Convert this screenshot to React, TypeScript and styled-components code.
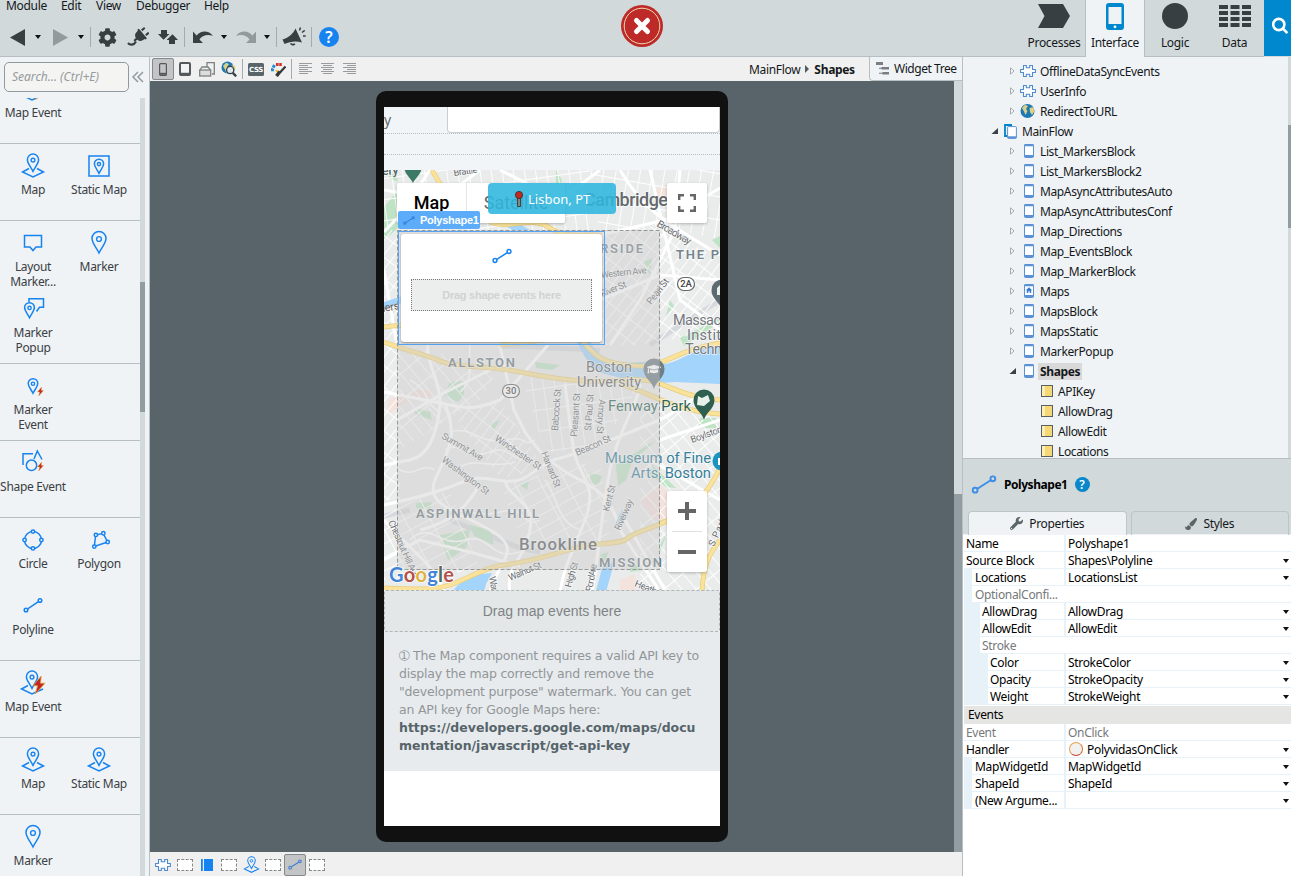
import React from 'react';
import styled, { createGlobalStyle, css } from 'styled-components';
import { FaCog, FaPlug, FaWrench, FaPaintBrush, FaGraduationCap } from 'react-icons/fa';

const BLUE = '#1783f0';
const INK = '#383f42';
const CHROME = '#d1d9db';
const PANEL = '#eff3f6';
const LINE = '#b6c0c4';

const GlobalStyle = createGlobalStyle`
  * { box-sizing: border-box; }
  body {
    margin: 0;
    font-family: 'Noto Sans', 'Open Sans', sans-serif;
    font-size: 12px;
    letter-spacing: -0.32px;
    color: #15181a;
    overflow: hidden;
  }
  svg { display: block; flex: none; }
`;

const Window = styled.div`
  width: 1291px;
  height: 876px;
  display: flex;
  flex-direction: column;
  background: ${PANEL};
  overflow: hidden;
`;

/* ---------- top bar ---------- */

const TopBar = styled.header`
  height: 57px;
  flex: none;
  display: flex;
  background: ${CHROME};
`;
const Commands = styled.div`
  width: 621px;
  border-bottom: 1px solid ${LINE};
`;
const MenuRow = styled.nav`
  display: flex;
  height: 18px;
  padding-left: 6px;
  line-height: 12px;
`;
const MenuItem = styled.span<{ $w: number }>`
  width: ${p => p.$w}px;
  white-space: nowrap;
`;
const ToolRow = styled.div`
  display: flex;
  align-items: center;
  height: 38px;
  padding-left: 10px;
`;
const Tool = styled.span<{ $w: number; $gap?: number; $dim?: boolean }>`
  width: ${p => p.$w}px;
  margin-left: ${p => p.$gap ?? 0}px;
  display: flex;
  justify-content: center;
  flex: none;
  color: ${p => (p.$dim ? '#94999c' : INK)};
`;
const Separator = styled.span<{ $gap: number; $h?: number }>`
  width: 1px;
  height: ${p => p.$h ?? 20}px;
  margin-left: ${p => p.$gap}px;
  background: #a3abae;
  flex: none;
`;
const HelpDot = styled.span<{ $size: number; $color: string }>`
  width: ${p => p.$size}px;
  height: ${p => p.$size}px;
  border-radius: 50%;
  background: ${p => p.$color};
  color: #fff;
  font-weight: 600;
  font-size: ${p => p.$size * 0.8}px;
  line-height: ${p => p.$size}px;
  text-align: center;
  letter-spacing: 0;
  flex: none;
`;
const StatusSlot = styled.div`
  flex: 1;
  padding-top: 5px;
  border-bottom: 1px solid ${LINE};
`;
const Layers = styled.div`
  display: flex;
  width: 268px;
`;
const LayerTab = styled.div<{ $w: number; $active?: boolean }>`
  width: ${p => p.$w}px;
  flex: none;
  padding-top: 2px;
  display: flex;
  flex-direction: column;
  align-items: center;
  gap: 5px;
  line-height: 16px;
  border-bottom: 1px solid ${LINE};
  color: #15181a;
  ${p =>
    p.$active &&
    css`
      background: ${PANEL};
      border: solid ${LINE};
      border-width: 0 1px;
    `}
`;
const LayerIcon = styled.span`
  height: 28px;
  display: flex;
  align-items: center;
`;
const SearchTab = styled.div`
  width: 27px;
  height: 56px;
  background: #0088ce;
  overflow: hidden;
  padding: 17px 0 0 7px;
`;

const Main = styled.div`
  flex: 1;
  display: flex;
  min-height: 0;
`;

/* ---------- widget palette ---------- */

const Palette = styled.aside`
  width: 150px;
  flex: none;
  display: flex;
  flex-direction: column;
  border-right: 1px solid ${LINE};
`;
const SearchRow = styled.div`
  height: 41px;
  flex: none;
  display: flex;
  padding: 5px 0 0 4px;
  gap: 3px;
`;
const SearchInput = styled.div`
  width: 125px;
  height: 30px;
  border: 1px solid #8f9a9e;
  border-radius: 5px;
  background: #f4f4f3;
  padding-left: 7px;
  line-height: 28px;
  font-style: italic;
  color: #949a9d;
  letter-spacing: 0;
`;
const PaletteBody = styled.div`
  flex: 1;
  display: flex;
  overflow: hidden;
`;
const PaletteList = styled.div`
  width: 140px;
  margin-top: -31px;
`;
const Group = styled.section`
  display: flex;
  flex-wrap: wrap;
  padding-bottom: 10px;
  border-bottom: 1px solid ${LINE};
`;
const Widget = styled.div`
  width: 66px;
  height: 66px;
  padding-top: 6px;
  display: flex;
  flex-direction: column;
  align-items: center;
  line-height: 15px;
  text-align: center;
  white-space: pre;
  color: #3a4043;
`;
const Track = styled.div<{ $w: number; $pad: number }>`
  width: ${p => p.$w}px;
  padding-top: ${p => p.$pad}px;
  background: ${CHROME};
  flex: none;
`;
const Thumb = styled.div<{ $h: number }>`
  height: ${p => p.$h}px;
  background: #929da1;
`;

/* ---------- canvas ---------- */

const Center = styled.main`
  width: 812px;
  flex: none;
  display: flex;
  flex-direction: column;
`;
const CanvasBar = styled.div`
  height: 24px;
  flex: none;
  display: flex;
  align-items: center;
  background: #f0f0f0;
  padding-left: 2px;
`;
const Pressed = styled.span`
  width: 22px;
  height: 22px;
  display: flex;
  align-items: center;
  justify-content: center;
  background: #c3c4c5;
  border: 1px solid #84898b;
  border-radius: 2px;
`;
const Crumbs = styled.div`
  margin-left: auto;
  width: 120px;
  display: flex;
  align-items: center;
  gap: 5px;
`;
const WidgetTree = styled.div`
  align-self: flex-start;
  width: 93px;
  height: 24px;
  display: flex;
  align-items: center;
  gap: 5px;
  padding-left: 6px;
  background: ${PANEL};
  border: solid ${LINE};
  border-width: 0 0 1px 1px;
  border-radius: 0 0 0 4px;
  white-space: nowrap;
  letter-spacing: -0.45px;
`;
const Stage = styled.div`
  flex: 1;
  display: flex;
  min-height: 0;
  background: #586469;
`;
const StageArea = styled.div`
  flex: 1;
  padding: 10px 0 0 226px;
`;
const Phone = styled.div`
  width: 352px;
  height: 751px;
  padding: 16px 8px;
  border-radius: 10px;
  background: #111;
`;
const Screen = styled.div`
  height: 719px;
  background: #fff;
  overflow: hidden;
`;
const FormArea = styled.div`
  height: 63px;
  background: #f1f5f8;
`;
const FormRow = styled.div`
  height: 27px;
  display: flex;
  justify-content: space-between;
  border-bottom: 1px dotted #b9bec1;
  color: #65696c;
  font: 14px/26px 'Noto Sans', sans-serif;
`;
const FormInput = styled.div`
  width: 273px;
  height: 26px;
  background: #fff;
  border: 1px solid #c8cfd3;
  border-top: 0;
  border-radius: 0 0 4px 4px;
`;
const EmptyRow = styled.div`
  height: 21px;
  border-bottom: 1px dotted #b9bec1;
`;
const MapArea = styled.div`
  position: relative;
  height: 420px;
`;
const EventsDrop = styled.div`
  height: 42px;
  background: #e3e7e8;
  border: 1px dashed #b0b5b6;
  border-radius: 2px;
  text-align: center;
  font: 14px/40px 'Liberation Sans', sans-serif;
  letter-spacing: 0;
  color: #7f8385;
`;
const Notice = styled.div`
  height: 139px;
  padding: 15px 15px 0;
  background: #e7ebee;
  color: #929698;
  font: 12.5px/18px 'DejaVu Sans', sans-serif;
  letter-spacing: -0.2px;
  white-space: nowrap;
  b { color: #56646a; letter-spacing: 0; }
`;

const MapTypes = styled.div`
  position: absolute;
  left: 13px;
  top: 13px;
  width: 168px;
  height: 40px;
  display: flex;
  background: #fff;
  border-radius: 2px;
  box-shadow: 0 1px 3px rgba(0, 0, 0, 0.25);
  font: 18px/40px Roboto, sans-serif;
  letter-spacing: 0;
`;
const MapType = styled.span<{ $w: number; $on?: boolean }>`
  width: ${p => p.$w}px;
  text-align: center;
  color: ${p => (p.$on ? '#000' : '#666')};
  font-weight: ${p => (p.$on ? 500 : 400)};
  border-right: ${p => (p.$on ? '1px solid #e6e6e6' : '0')};
`;
const PlaceTag = styled.div`
  position: absolute;
  left: 104px;
  top: 13px;
  width: 128px;
  height: 31px;
  display: flex;
  align-items: center;
  gap: 4px;
  padding-left: 26px;
  border-radius: 4px;
  background: rgba(45, 182, 222, 0.88);
  color: #fff;
  font-size: 13px;
  letter-spacing: 0;
`;
const MapButton = styled.div<{ $top: number; $h: number }>`
  position: absolute;
  left: 283px;
  top: ${p => p.$top}px;
  width: 40px;
  height: ${p => p.$h}px;
  background: #fff;
  border-radius: 2px;
  box-shadow: 0 1px 3px rgba(0, 0, 0, 0.25);
  display: flex;
  flex-direction: column;
  align-items: center;
  justify-content: center;
  gap: 11px;
`;
const ZoomRule = styled.span`
  width: 30px;
  height: 1px;
  background: #e0e0e0;
`;
const Selection = styled.div`
  position: absolute;
  left: 14px;
  top: 61px;
  width: 207px;
  height: 114px;
  padding: 2px;
  border: 1px solid #53a4f5;
`;
const SelectionTag = styled.div`
  position: absolute;
  left: 14px;
  top: 41px;
  width: 82px;
  height: 18px;
  display: flex;
  align-items: center;
  gap: 5px;
  padding-left: 5px;
  border-radius: 2px;
  background: #5dacfa;
  color: #fff;
  font: bold 11px 'Liberation Sans', sans-serif;
  letter-spacing: -0.25px;
`;
const ShapeCard = styled.div`
  height: 108px;
  padding: 12px 10px 0;
  border-radius: 3px;
  background: #fff;
  box-shadow: 0 1px 2px rgba(0, 0, 0, 0.35);
  display: flex;
  flex-direction: column;
  align-items: center;
  gap: 13px;
`;
const ShapeDrop = styled.div`
  width: 181px;
  height: 32px;
  border: 1px dotted #777;
  background: #eceeee;
  color: #cfd3d3;
  text-align: center;
  font: bold 11px/30px 'Liberation Sans', sans-serif;
  letter-spacing: -0.25px;
`;

const StatusBar = styled.div`
  height: 24px;
  flex: none;
  display: flex;
  align-items: center;
  background: #f0f0f0;
  padding: 1px 0 0 2px;
`;
const PathItem = styled.span`
  width: 22px;
  display: flex;
  justify-content: center;
`;
const DashBox = styled.span`
  width: 16px;
  height: 12px;
  border: 1px dashed #85898a;
  background: #fff;
`;

/* ---------- right side ---------- */

const Side = styled.aside`
  width: 329px;
  flex: none;
  display: flex;
  flex-direction: column;
  border-left: 1px solid ${LINE};
`;
const TreePane = styled.div`
  height: 402px;
  display: flex;
  border-bottom: 1px solid ${LINE};
  overflow: hidden;
`;
const TreeList = styled.div`
  flex: 1;
  padding-top: 4px;
`;
const TreeRow = styled.div<{ $level: number }>`
  height: 20px;
  padding-left: ${p => 25 + 18 * p.$level}px;
  display: flex;
  align-items: center;
  white-space: nowrap;
`;
const Slot = styled.span<{ $w: number; $nudge?: boolean }>`
  width: ${p => p.$w}px;
  padding-left: ${p => (p.$nudge ? 2 : 0)}px;
  display: flex;
  justify-content: center;
  flex: none;
`;
const TreeName = styled.span<{ $on?: boolean }>`
  padding: 0 2px;
  line-height: 17px;
  font-weight: ${p => (p.$on ? 700 : 400)};
  letter-spacing: -0.38px;
  background: ${p => (p.$on ? '#d9d9d9' : 'transparent')};
`;
const InspectorHead = styled.div`
  height: 52px;
  flex: none;
  display: flex;
  align-items: center;
  gap: 7px;
  padding: 0 0 2px 8px;
  background: ${CHROME};
  color: #000;
  b { letter-spacing: -0.45px; }
`;
const TabRow = styled.div`
  height: 24px;
  flex: none;
  display: flex;
  gap: 4px;
  padding: 0 2px 0 5px;
  background: ${CHROME};
  border-bottom: 1px solid ${PANEL};
`;
const Tab = styled.div<{ $on?: boolean }>`
  width: 159px;
  height: 24px;
  display: flex;
  align-items: center;
  justify-content: center;
  gap: 6px;
  border: 1px solid #bcc5c8;
  border-bottom: 0;
  border-radius: 4px 4px 0 0;
  background: ${p => (p.$on ? PANEL : 'transparent')};
  color: #15181a;
  svg { color: #5b6468; }
`;
const Props = styled.div`
  flex: 1;
  background: #fff;
  padding-left: 1px;
  color: #000;
`;
const PropRow = styled.div<{ $level: number; $mute?: boolean }>`
  height: 17px;
  display: flex;
  border-left: ${p => p.$level * 8}px solid #e6f1f8;
  border-bottom: 1px solid #e6f1f8;
  line-height: 17px;
  white-space: nowrap;
  color: ${p => (p.$mute ? '#75797b' : '#000')};
`;
const PropName = styled.span<{ $level: number; $wide?: boolean }>`
  width: ${p => 102 - p.$level * 8}px;
  padding-left: ${p => (p.$level === 1 ? 3 : 2)}px;
  border-right: ${p => (p.$wide ? 0 : 2)}px solid #e6f1f8;
`;
const PropValue = styled.span`
  flex: 1;
  display: flex;
  align-items: center;
  gap: 4px;
  padding-left: 2px;
`;
const Caret = styled.span`
  width: 0;
  height: 0;
  border: solid transparent;
  border-width: 4px 3px 0;
  border-top-color: #111;
`;
const EndCaret = styled(Caret)`
  margin: 7px 2px 0 0;
`;
const PropSection = styled.div`
  height: 19px;
  padding-left: 4px;
  line-height: 18px;
  background: #e5e5e3;
  border-top: 1px solid #fff;
`;
const EventBall = styled.span`
  width: 14px;
  height: 14px;
  margin-left: 1px;
  border-radius: 50%;
  border: 1px solid #e5a24c;
  border-bottom-color: #c8402a;
  border-right-color: #d8702a;
  background: #f1f1f1;
`;

/* ---------- drawings ---------- */

const Polyline = ({ w = 20, h = 15, color = BLUE }: { w?: number; h?: number; color?: string }) => (
  <svg width={w} height={h} viewBox="0 0 20 15" fill="none" stroke={color} strokeWidth="1.5">
    <circle cx="3" cy="12" r="1.9" />
    <circle cx="17" cy="3" r="1.9" />
    <path d="M4.8 10.8 15.3 4.2" />
  </svg>
);

const Pin = ({ x, y, s }: { x: number; y: number; s: number }) => (
  <g transform={`translate(${x} ${y}) scale(${s})`}>
    <path d="M0 21C-3 15-7 11-7 6.5a7 7 0 0 1 14 0C7 11 3 15 0 21Z" strokeWidth={1.5 / s} />
    <circle cx="0" cy="7" r="2.4" strokeWidth={1.4 / s} />
  </g>
);

const MapBase = () => <path d="M12 18.5 5.5 22 16 27 26.5 22 20 18.5" />;
const Bolt = ({ x, y, s }: { x: number; y: number; s: number }) => (
  <path
    transform={`translate(${x} ${y}) scale(${s})`}
    d="M5.5 0 0 6.5h3L1.5 12 8 4.8H5Z"
    fill="#c0281f"
    stroke="#e8a33c"
    strokeWidth=".5"
  />
);

const widgetArt: Record<string, React.ReactNode> = {
  map: <><Pin x={16} y={4.5} s={0.8} /><MapBase /></>,
  staticMap: <><rect x="6" y="6" width="20" height="20" /><Pin x={16} y={9.5} s={0.66} /></>,
  layout: <path d="M7.5 8.5h17v11.5h-5.5l-3 3.5-3-3.5H7.5Z" />,
  marker: <Pin x={16} y={5} s={1} />,
  popup: <><path d="M12 9V5.7h14.5v8.600h-4L19.5 18.500" /><Pin x={12.5} y={10} s={0.7} /></>,
  markerEvent: <><Pin x={16} y={9} s={0.68} /><Bolt x={20.5} y={17} s={0.75} /></>,
  shapeEvent: <><path d="M6 18V6.800h10M17 12l3.3-8L25 12.5" /><circle cx="14.5" cy="18.3" r="5.2" /><Bolt x={20.5} y={15} s={0.75} /></>,
  circle: <><circle cx="16" cy="16" r="8.5" /><g fill={PANEL}><circle cx="16" cy="7.6" r="1.7" /><circle cx="16" cy="24.4" r="1.7" /><circle cx="7.6" cy="16" r="1.7" /><circle cx="24.4" cy="16" r="1.7" /></g></>,
  polygon: <><path d="M12.700 11 11.300 22.500 24.600 18 20.200 9.300Z" /><g fill={PANEL}><circle cx="12.900" cy="10.9" r="1.7" /><circle cx="20.300" cy="9.3" r="1.7" /><circle cx="24.700" cy="18" r="1.7" /><circle cx="11.300" cy="22.6" r="1.7" /></g></>,
  polyline: <><circle cx="9" cy="20" r="1.8" /><circle cx="23" cy="10.5" r="1.8" /><path d="M10.7 18.9 21.4 11.6" /></>,
  mapEvent: <><Pin x={15} y={4.5} s={0.8} /><path d="M11 18.5 4.5 22 15 27 26 22" /><Bolt x={16} y={9} s={1.5} /></>,
};

const WidgetIcon = ({ kind, size = 32, box = '0 0 32 32' }: { kind: string; size?: number; box?: string }) => (
  <svg width={size} height={size} viewBox={box} fill="none" stroke={BLUE} strokeWidth="1.5">
    {widgetArt[kind]}
  </svg>
);

const groups: [string, string][][] = [
  [['mapEvent', 'Map Event']],
  [['map', 'Map'], ['staticMap', 'Static Map']],
  [['layout', 'Layout\nMarker...'], ['marker', 'Marker'], ['popup', 'Marker\nPopup']],
  [['markerEvent', 'Marker\nEvent']],
  [['shapeEvent', 'Shape Event']],
  [['circle', 'Circle'], ['polygon', 'Polygon'], ['polyline', 'Polyline']],
  [['mapEvent', 'Map Event']],
  [['map', 'Map'], ['map', 'Static Map']],
  [['marker', 'Marker']],
];

const Puzzle = () => (
  <svg width="16" height="14" viewBox="0 0 16 14" fill="#fff" stroke="#4f8bd0" strokeWidth="1.1">
    <path d="M3.500 1.5h2.800v2.200h3.400V1.500h2.800v4h2.900V8.500h-2.900v4H9.700v-2.200H6.300v2.200H3.500v-4H.6v-3h2.900Z" />
  </svg>
);
const Globe = ({ glass }: { glass?: boolean }) => (
  <svg width="16" height="16" viewBox="0 0 16 16">
    <circle cx={glass ? 6.5 : 7.5} cy={glass ? 6.5 : 8} r={glass ? 6 : 7} fill="#1e78b4" />
    <path d="M2 5 5 1.8 8 3 6 6 7.5 8 5.5 12 4 8.5ZM9.5 5l4-1 1 4-2.5 4L10 9Z" fill="#dcd287" />
    {glass && <><circle cx="9.2" cy="9" r="3.6" fill="#d9e8f2" stroke="#394145" strokeWidth="1.3" /><path d="m11.8 11.8 3.4 3.5" stroke="#394145" strokeWidth="2.4" /></>}
  </svg>
);
const ScreenIcon = ({ home }: { home?: boolean }) => (
  <svg width="10" height="14" viewBox="0 0 10 14">
    <rect x=".5" y=".5" width="9" height="13" rx=".8" fill="#fff" stroke="#5a91d4" />
    <path d="M.5 12h9M.5 1.2h9" stroke="#5a91d4" strokeWidth="2" />
    {home && <path d="M5 3.2 1.8 6.2h1V9H4.300V7.300h1.400V9H7.200V6.200h1Z" fill="#3d7ccc" />}
  </svg>
);
const FlowIcon = () => (
  <svg width="13" height="15" viewBox="0 0 13 15">
    <path d="M8 1H1v11h3" fill="none" stroke="#0083cb" strokeWidth="1.8" />
    <rect x="3.600" y="2.600" width="8.800" height="11.800" rx=".8" fill="#fff" stroke="#5a91d4" />
    <path d="M3.600 13.200h8.800" stroke="#5a91d4" strokeWidth="1.800" />
  </svg>
);
const InputIcon = () => (
  <svg width="12" height="12" viewBox="0 0 12 12">
    <rect x=".5" y=".5" width="11" height="11" fill="#f4d777" stroke="#5d6062" />
    <path d="M1 1h3v10H1Z" fill="#fbefb4" />
  </svg>
);
const treeIcons: Record<string, React.ReactNode> = {
  puzzle: <Puzzle />, globe: <Globe />, flow: <FlowIcon />, screen: <ScreenIcon />, home: <ScreenIcon home />, input: <InputIcon />,
};
type TreeItem = [level: number, icon: string, name: string, open?: boolean];
const tree: TreeItem[] = [
  [1, 'puzzle', 'OfflineDataSyncEvents'], [1, 'puzzle', 'UserInfo'], [1, 'globe', 'RedirectToURL'],
  [0, 'flow', 'MainFlow', true],
  [1, 'screen', 'List_MarkersBlock'], [1, 'screen', 'List_MarkersBlock2'], [1, 'screen', 'MapAsyncAttributesAuto'],
  [1, 'screen', 'MapAsyncAttributesConf'], [1, 'screen', 'Map_Directions'], [1, 'screen', 'Map_EventsBlock'],
  [1, 'screen', 'Map_MarkerBlock'], [1, 'home', 'Maps'], [1, 'screen', 'MapsBlock'], [1, 'screen', 'MapsStatic'],
  [1, 'screen', 'MarkerPopup'], [1, 'screen', 'Shapes', true],
  [2, 'input', 'APIKey'], [2, 'input', 'AllowDrag'], [2, 'input', 'AllowEdit'], [2, 'input', 'Locations'],
];

const Twisty = ({ open }: { open?: boolean }) => (
  <svg width="7" height="8" viewBox="0 0 7 8">
    {open ? <path d="M7 1v6H.5Z" fill="#3a4144" /> : <path d="M1.500 .8v6.400L5 4Z" fill="#f8f9fa" stroke="#a6abad" />}
  </svg>
);

type Prop = { level?: number; name: string; value?: string; mute?: boolean; menu?: boolean; ball?: boolean };
const mainProps: Prop[] = [
  { name: 'Name', value: 'Polyshape1' },
  { name: 'Source Block', value: 'Shapes\\Polyline', menu: true },
  { level: 1, name: 'Locations', value: 'LocationsList', menu: true },
  { level: 1, name: 'OptionalConfi...', mute: true },
  { level: 2, name: 'AllowDrag', value: 'AllowDrag', menu: true },
  { level: 2, name: 'AllowEdit', value: 'AllowEdit', menu: true },
  { level: 2, name: 'Stroke', mute: true },
  { level: 3, name: 'Color', value: 'StrokeColor', menu: true },
  { level: 3, name: 'Opacity', value: 'StrokeOpacity', menu: true },
  { level: 3, name: 'Weight', value: 'StrokeWeight', menu: true },
];
const eventProps: Prop[] = [
  { name: 'Event', value: 'OnClick', mute: true },
  { name: 'Handler', value: 'PolyvidasOnClick', menu: true, ball: true },
  { level: 1, name: 'MapWidgetId', value: 'MapWidgetId', menu: true },
  { level: 1, name: 'ShapeId', value: 'ShapeId', menu: true },
  { level: 1, name: '(New Argume...', value: '', menu: true },
];
const PropertyRow = ({ level = 0, name, value, mute, menu, ball }: Prop) => (
  <PropRow $level={level} $mute={mute}>
    <PropName $level={level} $wide={value === undefined}>{name}</PropName>
    <PropValue>{ball && <EventBall />}{value}</PropValue>
    {menu && <EndCaret />}
  </PropRow>
);

/* ---------- map drawing ---------- */

/* x, y, text, length, size, rotation, colour, weight */
type Label = [number, number, string, number, number, number, string, number];
const GREY = '#676c70';
const labels: Label[] = [
  [382, 175, 'ery', 17, 13, -3, '#5b6a6a', 500],
  [454, 176, 'Brattle', 24, 9.5, -8, GREY, 400],
  [584, 206, 'Cambridge', 84, 18, 0, '#64696d', 500],
  [656, 226, 'Broadway', 38, 10.5, 30, GREY, 400],
  [600, 253, 'RSIDE', 43, 13, 0, '#75838b', 600],
  [676, 259, 'THE P', 43, 13, 0, '#75838b', 600],
  [601, 278, 'Western Ave', 46, 9.5, -6, GREY, 400],
  [602, 297, 'River St', 27, 9.5, -22, GREY, 400],
  [651, 305, 'Pearl St', 30, 9.5, -52, GREY, 400],
  [673, 325, 'Massac', 48, 14.5, 0, '#74797d', 400],
  [687, 340, 'Instit', 34, 14.5, 0, '#74797d', 400],
  [685, 354, 'Techn', 37, 14.5, 0, '#74797d', 400],
  [448, 367, 'ALLSTON', 67, 13, 0, '#6b7a83', 600],
  [586, 372, 'Boston', 46, 14.5, 0, '#5b6266', 400],
  [577, 387, 'University', 64, 14.5, 0, '#5b6266', 400],
  [608, 411, 'Fenway Park', 83, 14.8, 0, '#2f6558', 400],
  [605, 463, 'Museum of Fine', 106, 14.8, 0, '#357f9a', 400],
  [631, 478, 'Arts, Boston', 80, 14.8, 0, '#357f9a', 400],
  [558, 431, 'Babcock St', 42, 9.5, -86, GREY, 400],
  [577, 437, 'Pleasant St', 44, 9.5, -86, GREY, 400],
  [591, 431, 'St Paul St', 37, 9.5, -86, GREY, 400],
  [599, 399, 'Amory St', 35, 9.5, 94, GREY, 400],
  [577, 456, 'Beacon St', 38, 9.5, -24, GREY, 400],
  [541, 453, 'Harvard St', 38, 9.5, 68, GREY, 400],
  [494, 440, 'Winchester St', 54, 9.5, 34, GREY, 400],
  [441, 438, 'Summit Ave', 46, 9.5, 30, GREY, 400],
  [441, 461, 'Washington St', 57, 9.5, 37, GREY, 400],
  [388, 522, 'Chestnut Hill Ave', 62, 9.5, 66, GREY, 400],
  [609, 512, 'Kent St', 27, 9.5, -76, GREY, 400],
  [620, 531, 'Riverway', 33, 9.5, -66, GREY, 400],
  [692, 443, 'Boylston', 33, 9.5, -20, GREY, 400],
  [416, 518, 'ASPINWALL HILL', 123, 13, 0, '#6b7a83', 600],
  [519, 550, 'Brookline', 78, 16.8, 0, '#5b6064', 500],
  [599, 567, 'MISSION', 63, 13, 0, '#6b7a83', 600],
  [510, 581, 'Walnut St', 35, 9.5, -23, GREY, 400],
  [571, 588, 'High St', 26, 9.5, -74, GREY, 400],
  [592, 592, 'Pond Ave', 28, 9.5, -80, GREY, 400],
  [634, 586, 'Heath St', 32, 9.5, 22, GREY, 400],
  [489, 577, 'Warren', 25, 9.5, 80, GREY, 400],
  [714, 547, 'S Parker', 40, 9.5, -66, GREY, 400],
];

const highways = [
  'M384 342C410 352 428 355 440 361S490 366 520 372S585 384 625 380S670 396 720 400',
  'M582 340C592 352 598 365 640 366C665 367 675 350 720 343',
  'M384 588C430 590 440 590 460 581S490 566 510 564S560 552 580 547S620 545 628 538S650 530 668 520S700 508 720 468',
  'M702 592C703 568 708 555 720 540',
  'M432 170 440 184 462 196',
  'M384 327C398 325 405 326 412 322M490 222C510 230 530 215 550 228S590 232 602 236',
  'M620 384C650 392 672 411 720 414M500 345 560 338 590 330',
];
const mainRoads = [
  'M384 505C410 499 430 495 455 485S480 478 505 481S535 464 560 458S620 436 650 424S665 414 700 395',
  'M384 465 410 460C432 455 438 425 440 405S425 360 428 345',
  'M397 420 440 395 500 365M384 392 445 404C470 410 480 408 500 400L548 345',
  'M445 404C460 440 445 455 435 480S455 510 490 530S498 560 490 592',
  'M500 346 514 410 525 432C540 455 560 470 580 480S612 500 620 530L660 592',
  'M565 384 572 440C576 480 600 480 585 520S566 560 560 592',
  'M640 384C640 400 618 430 610 470S598 560 592 592',
  'M384 520C410 550 430 560 445 592M384 560 420 540 470 552 520 566',
  'M480 484C470 500 460 520 420 530M505 481C510 500 535 500 530 530S505 566 510 592',
  'M620 170C640 205 660 220 720 255M600 235 665 220 720 188M650 170 680 300 720 330',
  'M610 345 640 300 675 230 680 170M600 300 660 275 720 280M660 440 720 420M650 460 720 500M625 520 665 590',
  'M384 190 440 200 480 170M384 270 396 340M500 170 560 200 600 170M384 232 400 215 430 170',
];
const greens = [
  'M384 207 398 190 398 228 384 240ZM444 395 450 382 464 381 464 395 458 402Z',
  'M414 408 430 412 432 420 415 414ZM388 177 396 172 398 182ZM490 424 500 420 494 430Z',
  'M440 535 470 530 466 548 448 560ZM470 525 490 530 494 545 474 536ZM416 503 432 502 430 510 416 508Z',
  'M520 485 529 481 527 490ZM590 473 602 476 598 486 590 482ZM656 440 632 462 626 480 618 486 616 465Z',
  'M700 418 716 418 716 428 698 428ZM652 465 676 488 666 487 650 474ZM660 545 668 530 660 552ZM604 565 612 562 606 590 596 590Z',
  'M630 560 642 570 630 572ZM535 362 560 365 552 370 536 368ZM644 262 652 258 650 276ZM666 316 670 300 674 306Z',
  'M556 170 562 180 556 190ZM712 240 720 236 720 248ZM600 555 608 552 606 562ZM680 338 720 318 720 322 684 346Z',
];

const MapDrawing = () => (
  <svg width="336" height="420" viewBox="384 170 336 420" fontFamily="Roboto, sans-serif">
    <defs>
      {[['g1', 38, 9], ['g2', 62, 12], ['g3', -8, 11], ['g4', -40, 11], ['g5', 10, 12]].map(([id, r, s]) => (
        <pattern key={id} id={String(id)} width={s} height={Number(s) * 1.9} patternUnits="userSpaceOnUse" patternTransform={`rotate(${r})`}>
          <path d={`M0 0H${s}M0 0V${Number(s) * 1.9}`} stroke="#fff" strokeWidth="1.8" />
        </pattern>
      ))}
    </defs>
    <path d="M384 170H720V590H384Z" fill="#eaebeb" />
    <path d="M388 400 407 392 407 402 388 414ZM410 390 432 390 430 402 414 400ZM640 500 660 485 676 500 680 520 655 520ZM655 190 668 184 670 196 660 202ZM620 580 635 574 636 590 620 590Z" fill="#f4e2dc" />
    <path d="M384 516 410 510M450 520 520 548 540 552M500 346 600 350M650 345 720 300" stroke="#d6d9dd" strokeWidth="5" fill="none" />
    {greens.map(d => <path key={d} d={d} fill="#bfe3c5" />)}
    <path d="M590 170H720V240L660 225 600 236Z" fill="url(#g5)" />
    <path d="M600 236 660 225 720 260V330L640 345H600Z" fill="url(#g1)" />
    <path d="M398 345 500 366 480 400 400 450Z" fill="url(#g4)" />
    <path d="M450 410 500 400 545 470 500 478Z" fill="url(#g1)" />
    <path d="M520 372 640 384 600 450 545 452Z" fill="url(#g3)" />
    <path d="M384 510 450 490 480 570 384 580Z" fill="url(#g2)" />
    <path d="M500 485 600 460 610 540 520 540Z" fill="url(#g2)" />
    <path d="M640 400 720 415V590H640Z" fill="url(#g4)" />
    <path d="M384 170H590V230H384Z" fill="url(#g3)" />
    <path d="M384 230H400V500H384Z" fill="url(#g1)" />
    <g fill="none" stroke="#fff" strokeWidth="1.6">
      <path d="M445 450C460 440 470 460 490 452S510 462 530 460M450 432C470 425 480 445 505 440S520 448 535 440M455 470C475 455 490 470 515 462M430 515C450 500 470 520 500 512S520 530 540 520" />
      <path d="M400 470C415 478 420 462 435 470M410 540C430 520 440 548 465 540S490 562 520 552M410 380C430 390 425 405 440 412M470 345C468 360 475 380 460 392M545 480C560 500 555 520 580 530" />
    </g>
    {mainRoads.map(d => <path key={d} d={d} fill="none" stroke="#fff" strokeWidth="3" />)}
    <path d="M575 338 590 340C596 358 615 365 640 362L665 364C680 362 690 350 720 345V384L675 382C650 385 620 378 605 374S582 352 575 338ZM500 222 516 222 530 230 512 230ZM384 302 402 296 402 303 384 309ZM452 592C462 578 475 574 492 573L486 584 484 592ZM596 592 602 568 614 563 606 592ZM616 522 622 510 626 514 618 530Z" fill="#a3d4fb" />
    {highways.map(d => <path key={d} d={d} fill="none" stroke="#e6cd7d" strokeWidth="5" />)}
    {highways.map(d => <path key={`in ${d}`} d={d} fill="none" stroke="#fae29a" strokeWidth="3.6" />)}
    <path d="M404 165h18c0 9-6 12-9 18-3-6-9-9-9-18Z" fill="#3d7a66" />
    {labels.map(([x, y, text, len, size, rot, fill, weight]) => (
      <text
        key={text} x={x} y={y} fontSize={size} fontWeight={weight} fill={fill} textLength={len} letterSpacing="0"
        transform={rot ? `rotate(${rot} ${x} ${y})` : undefined}
        stroke="#fff" strokeOpacity=".7" strokeWidth="1.6" paintOrder="stroke"
      >{text}</text>
    ))}
    <text x="383" y="312" fontSize="11" fill="#6b5a4c" textLength="17" letterSpacing="0" transform="rotate(-10 383 312)">iers</text>
    {[[511, 391, '30'], [686, 284, '2A']].map(([x, y, t]) => (
      <g key={t}>
        <rect x={Number(x) - 8.500} y={Number(y) - 6.500} width="17" height="13" rx="6.500" fill="#fff" stroke="#666" strokeWidth="1.200" />
        <text x={x} y={Number(y) + 3.300} fontSize="9.500" fill="#444" textAnchor="middle" fontWeight="500" letterSpacing="0">{t}</text>
      </g>
    ))}
    {[[654, 369, '#6f7f86'], [704, 400, '#2f5f50'], [722, 290, '#5d6a70']].map(([x, y, c]) => (
      <path key={x} transform={`translate(${x} ${y})`} d="M0 20C-2 12-10.500 9-10.500 0a10.500 10.500 0 0 1 21 0C10.500 9 2 12 0 20Z" fill={String(c)} />
    ))}
    <g transform="translate(647 362)" color="#fff"><FaGraduationCap size={14} /></g>
    <path d="M698 396l4 2 6-3 2 6-6 5-7-1ZM717 288l3-3v10h-3Z" fill="#e7f1ec" />
    <circle cx="722" cy="461" r="9.500" fill="#1b95bd" />
    <path d="M718 458h2v7h-2Z" fill="#fff" />
    <rect x="397.500" y="230.500" width="262" height="339" fill="rgba(202,202,202,.42)" stroke="#999" strokeDasharray="4 2" />
    <text x="389" y="582" fontFamily="Lato, sans-serif" fontSize="20" fontWeight="700" textLength="65" letterSpacing="0" stroke="#fff" strokeWidth="1.600" paintOrder="stroke">
      <tspan fill="#4285d8">G</tspan><tspan fill="#b5514a">o</tspan><tspan fill="#e0b13c">o</tspan><tspan fill="#4285d8">g</tspan><tspan fill="#55685a">l</tspan><tspan fill="#b5514a">e</tspan>
    </text>
  </svg>
);

const AlignIcon = ({ mode }: { mode: 0 | 1 | 2 }) => (
  <svg width="13" height="12" viewBox="0 0 13 12" stroke="#999c9e" strokeWidth="1">
    {[0, 1, 2, 3, 4, 5].map(i => {
      const w = i % 2 ? 9 : 13;
      const x = ((13 - w) * mode) / 2;
      return <path key={i} d={`M${x} ${i * 2 + 0.5}h${w}`} />;
    })}
  </svg>
);

const Undo = ({ flip }: { flip?: boolean }) => (
  <svg width="20" height="16" viewBox="0 0 20 16" fill="currentColor">
    <path transform={flip ? 'matrix(-1 0 0 1 20 0)' : undefined} d="M0 2.500V14h10L6.500 10.600C9 6.500 14 5 20 6.800 16 1.500 8 1 3.600 6.400Z" />
  </svg>
);

const Plug = () => (
  <svg width="22" height="20" viewBox="0 0 22 20">
    <path d="M1 16c2 2.300 6 2.300 8-1.500" fill="none" stroke="currentColor" strokeWidth="2.200" />
    <g transform="translate(5 0) rotate(50 8.500 8.500)"><FaPlug size={17} /></g>
  </svg>
);

export default function App() {
  return (
    <Window>
      <GlobalStyle />
      <TopBar>
        <Commands>
          <MenuRow>
            <MenuItem $w={55}>Module</MenuItem>
            <MenuItem $w={35}>Edit</MenuItem>
            <MenuItem $w={40}>View</MenuItem>
            <MenuItem $w={68}>Debugger</MenuItem>
            <MenuItem $w={30}>Help</MenuItem>
          </MenuRow>
          <ToolRow>
            <Tool $w={15}><svg width="15" height="17" viewBox="0 0 15 17"><path d="M15 0v17L0 8.500Z" fill="currentColor" /></svg></Tool>
            <Tool $w={6} $gap={10}><Caret /></Tool>
            <Tool $w={15} $gap={12} $dim><svg width="15" height="17" viewBox="0 0 15 17"><path d="M0 0v17L15 8.500Z" fill="currentColor" /></svg></Tool>
            <Tool $w={6} $gap={10}><Caret /></Tool>
            <Separator $gap={6} />
            <Tool $w={20} $gap={6}><FaCog size={19} /></Tool>
            <Tool $w={22} $gap={10}><Plug /></Tool>
            <Tool $w={20} $gap={9}>
              <svg width="20" height="14" viewBox="0 0 20 14" fill="currentColor">
                <path d="M3 0h6v4h2.500L5.500 9.800 0 4h3ZM11 14h6v-4h3L14.500 4.200 8.500 10H11Z" />
              </svg>
            </Tool>
            <Separator $gap={6} />
            <Tool $w={20} $gap={8}><Undo /></Tool>
            <Tool $w={6} $gap={8}><Caret /></Tool>
            <Tool $w={20} $gap={9} $dim><Undo flip /></Tool>
            <Tool $w={6} $gap={8}><Caret /></Tool>
            <Separator $gap={6} />
            <Tool $w={24} $gap={5}>
              <svg width="24" height="20" viewBox="0 0 24 20" fill="currentColor">
                <path d="M13.500 1.500 20 15.500C14 13.500 8 14.500 2.500 17L.5 12.500C7 10.500 11 7 13.500 1.500ZM8 16.500c1.500 2.600 4 2.600 5.500.500l-1.500-.800c-1 1-2 .800-2.500-.200Z" />
                <path d="M17.500 3.500 18.500.5M20 5.500l2.700-2.200M21 9h2.700" stroke="currentColor" strokeWidth="1.500" />
              </svg>
            </Tool>
            <Separator $gap={5} />
            <Tool $w={20} $gap={7}><HelpDot $size={20} $color={BLUE}>?</HelpDot></Tool>
          </ToolRow>
        </Commands>
        <StatusSlot>
          <svg width="42" height="42" viewBox="0 0 42 42">
            <circle cx="21" cy="21" r="21" fill="#bd2a27" />
            <circle cx="21" cy="21" r="17.800" fill="none" stroke="#f0dcb4" strokeWidth="1" />
            <path d="M15.500 15.500 26.500 26.500M26.500 15.500 15.500 26.500" stroke="#fff" strokeWidth="5" strokeLinecap="round" />
          </svg>
        </StatusSlot>
        <Layers>
          <LayerTab $w={62}>
            <LayerIcon><svg width="32" height="24" viewBox="0 0 32 24"><path d="M0 0h25l7 12-7 12H0l6.500-12Z" fill={INK} /></svg></LayerIcon>
            Processes
          </LayerTab>
          <LayerTab $w={60} $active>
            <LayerIcon>
              <svg width="18" height="27" viewBox="0 0 18 27"><rect width="18" height="27" rx="3" fill="#0088ce" /><path d="M2.500 4h13v17h-13Z" fill={PANEL} /><circle cx="9" cy="23.800" r="1.400" fill="#fff" /></svg>
            </LayerIcon>
            Interface
          </LayerTab>
          <LayerTab $w={60}>
            <LayerIcon><svg width="26" height="26" viewBox="0 0 26 26"><circle cx="13" cy="13" r="13" fill={INK} /></svg></LayerIcon>
            Logic
          </LayerTab>
          <LayerTab $w={59}>
            <LayerIcon>
              <svg width="32" height="22" viewBox="0 0 32 22" stroke={INK} strokeWidth="4">
                <path d="M0 2h9M11.500 2h9M23 2h9M0 8h9M11.500 8h9M23 8h9M0 14h9M11.500 14h9M23 14h9M0 20h9M11.500 20h9M23 20h9" />
              </svg>
            </LayerIcon>
            Data
          </LayerTab>
          <SearchTab>
            <svg width="18" height="18" viewBox="0 0 18 18" fill="none" stroke="#fff" strokeWidth="2.600"><circle cx="7.800" cy="7.500" r="5.600" /><path d="m11.800 11.500 4.600 4.600" /></svg>
          </SearchTab>
        </Layers>
      </TopBar>

      <Main>
        <Palette>
          <SearchRow>
            <SearchInput>Search... (Ctrl+E)</SearchInput>
            <svg width="12" height="30" viewBox="0 0 12 30" fill="none" stroke="#8f9a9e" strokeWidth="1.500"><path d="M6 10 1 15l5 5M11 10l-5 5 5 5" /></svg>
          </SearchRow>
          <PaletteBody>
            <PaletteList>
              {groups.map((group, i) => (
                <Group key={i}>
                  {group.map(([kind, name]) => <Widget key={name}><WidgetIcon kind={kind} />{name}</Widget>)}
                </Group>
              ))}
            </PaletteList>
            <Track $w={5} $pad={184}><Thumb $h={130} /></Track>
          </PaletteBody>
        </Palette>

        <Center>
          <CanvasBar>
            <Pressed>
              <svg width="8" height="13" viewBox="0 0 8 13"><rect x=".6" y=".6" width="6.800" height="11.800" rx="1" fill="none" stroke="#55595b" strokeWidth="1.200" /><path d="M1 10.800h6" stroke="#55595b" strokeWidth="2" /></svg>
            </Pressed>
            <Tool $w={12} $gap={5}><svg width="12" height="14" viewBox="0 0 12 14"><rect x="1" y="1" width="10" height="12" rx="1" fill="#f4f4f4" stroke="#55595b" strokeWidth="2" /><path d="M1 12h10" stroke="#55595b" strokeWidth="2.500" /></svg></Tool>
            <Tool $w={16} $gap={8}>
              <svg width="16" height="15" viewBox="0 0 16 15" fill="none" stroke="#7d8183" strokeWidth="1.300"><path d="M8 5V.7h7.300V12H13" /><rect x=".7" y="8" width="11" height="6" fill="#ddd" /><path d="M1 8 3 5h6l2.500 3" /></svg>
            </Tool>
            <Tool $w={16} $gap={6}><Globe glass /></Tool>
            <Separator $gap={5} />
            <Tool $w={16} $gap={5}>
              <svg width="16" height="13" viewBox="0 0 16 13"><rect width="16" height="13" rx="1.500" fill="#59656a" /><text x="8" y="9" fontSize="7" fontWeight="700" fill="#fff" textAnchor="middle" letterSpacing="-0.4" fontFamily="DejaVu Sans, sans-serif">CSS</text></svg>
            </Tool>
            <Tool $w={15} $gap={7}>
              <svg width="15" height="15" viewBox="0 0 15 15" fill="none" strokeWidth="3"><path d="M5 2.500h6" stroke="#d0362c" strokeDasharray="2.600 .6" /><path d="M3.500 3 1.500 7v3" stroke="#2a8bd0" strokeDasharray="3 .8" /><path d="M5 8l2 2.500" stroke="#f2b32c" strokeWidth="2" /><path d="M14.500 4.500 9 10.500" stroke="#33383a" strokeWidth="2.200" /><path d="M9 9.500 5.500 14" stroke="#33383a" strokeWidth="3.500" /></svg>
            </Tool>
            <Separator $gap={5} />
            <Tool $w={13} $gap={7}><AlignIcon mode={0} /></Tool>
            <Tool $w={13} $gap={9}><AlignIcon mode={1} /></Tool>
            <Tool $w={13} $gap={9}><AlignIcon mode={2} /></Tool>
            <Crumbs>
              MainFlow
              <svg width="4" height="8" viewBox="0 0 4 8"><path d="M0 0v8l4-4Z" fill="#55595b" /></svg>
              <b>Shapes</b>
            </Crumbs>
            <WidgetTree>
              <svg width="13" height="13" viewBox="0 0 13 13" fill="#7a7e80"><path d="M0 0h7v3H0ZM5.500 5H13v2.500H5.500ZM6.500 10H13v2.500H6.500ZM2 3h1v8.800h3.500v-1H3V6.800h2.500v-1H3V3Z" /></svg>
              Widget Tree
            </WidgetTree>
          </CanvasBar>
          <Stage>
            <StageArea>
              <Phone>
                <Screen>
                  <FormArea>
                    <FormRow>y<FormInput /></FormRow>
                    <EmptyRow />
                  </FormArea>
                  <MapArea>
                    <MapDrawing />
                    <MapTypes>
                      <MapType $w={70} $on>Map</MapType>
                      <MapType $w={98}>Satellite</MapType>
                    </MapTypes>
                    <PlaceTag>
                      <svg width="10" height="16" viewBox="0 0 10 16"><path d="M3.500 7h3v8.500h-3Z" fill="#8b8580" stroke="#3b2a28" strokeWidth=".8" /><circle cx="5" cy="4" r="3.600" fill="#c02a20" stroke="#3b2a28" strokeWidth=".8" /></svg>
                      Lisbon, PT
                    </PlaceTag>
                    <MapButton $top={13} $h={40}>
                      <svg width="18" height="18" viewBox="0 0 18 18" fill="none" stroke="#666" strokeWidth="2.400"><path d="M1.200 6V1.200H6M12 1.200h4.800V6M16.800 12v4.800H12M6 16.800H1.200V12" /></svg>
                    </MapButton>
                    <MapButton $top={321} $h={81}>
                      <svg width="18" height="18" viewBox="0 0 18 18"><path d="M0 9h18M9 0v18" stroke="#666" strokeWidth="4" /></svg>
                      <ZoomRule />
                      <svg width="18" height="18" viewBox="0 0 18 18"><path d="M0 9h18" stroke="#666" strokeWidth="4" /></svg>
                    </MapButton>
                    <Selection>
                      <ShapeCard>
                        <Polyline w={20} h={20} />
                        <ShapeDrop>Drag shape events here</ShapeDrop>
                      </ShapeCard>
                    </Selection>
                    <SelectionTag><Polyline w={12} h={9} color="#1f74cf" />Polyshape1</SelectionTag>
                  </MapArea>
                  <EventsDrop>Drag map events here</EventsDrop>
                  <Notice>
                    ➀ The Map component requires a valid API key to<br />
                    display the map correctly and remove the<br />
                    "development purpose" watermark. You can get<br />
                    an API key for Google Maps here:<br />
                    <b>https://developers.google.com/maps/docu<br />mentation/javascript/get-api-key</b>
                  </Notice>
                </Screen>
              </Phone>
            </StageArea>
            <Track $w={8} $pad={413}><Thumb $h={358} /></Track>
          </Stage>
          <StatusBar>
            <PathItem><Puzzle /></PathItem>
            <PathItem><DashBox /></PathItem>
            <PathItem><svg width="12" height="12" viewBox="0 0 12 12" fill={BLUE}><path d="M0 0h1.800v12H0ZM3 0h9v12H3Z" /></svg></PathItem>
            <PathItem><DashBox /></PathItem>
            <PathItem><WidgetIcon kind="map" size={17} box="4 3 24 25" /></PathItem>
            <PathItem><DashBox /></PathItem>
            <PathItem><Pressed><Polyline w={14} h={11} color="#3b7fd0" /></Pressed></PathItem>
            <PathItem><DashBox /></PathItem>
          </StatusBar>
        </Center>

        <Side>
          <TreePane>
            <TreeList>
              {tree.map(([level, icon, name, open]) => (
                <TreeRow key={name} $level={level}>
                  <Slot $w={12}>{level < 2 && <Twisty open={open} />}</Slot>
                  <Slot $w={20} $nudge={level > 0 && icon !== 'puzzle' && icon !== 'globe'}>{treeIcons[icon]}</Slot>
                  <TreeName $on={name === 'Shapes'}>{name}</TreeName>
                </TreeRow>
              ))}
            </TreeList>
            <Track $w={3} $pad={68}><Thumb $h={103} /></Track>
          </TreePane>
          <InspectorHead>
            <Polyline w={26} h={19} color="#3c8de6" />
            <b>Polyshape1</b>
            <HelpDot $size={15} $color="#0a86cb">?</HelpDot>
          </InspectorHead>
          <TabRow>
            <Tab $on><FaWrench size={13} />Properties</Tab>
            <Tab><FaPaintBrush size={12} />Styles</Tab>
          </TabRow>
          <Props>
            {mainProps.map(p => <PropertyRow key={p.name} {...p} />)}
            <PropSection>Events</PropSection>
            {eventProps.map(p => <PropertyRow key={p.name} {...p} />)}
          </Props>
        </Side>
      </Main>
    </Window>
  );
}
